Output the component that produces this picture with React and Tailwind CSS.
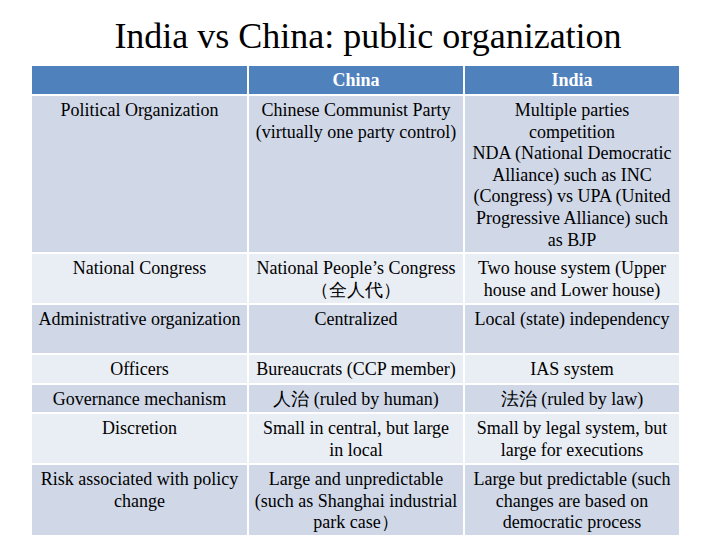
import React from 'react';

const rows = [
  {
    h: 'h-[156px]',
    bg: 'bg-[#d0d8e8]',
    cells: [
      ['Political Organization'],
      ['Chinese Communist Party', '(virtually one party control)'],
      [
        'Multiple parties',
        'competition',
        'NDA (National Democratic',
        'Alliance) such as INC',
        '(Congress) vs UPA (United',
        'Progressive Alliance) such',
        'as BJP',
      ],
    ],
  },
  {
    h: 'h-[49px]',
    bg: 'bg-[#e9edf4]',
    cells: [
      ['National Congress'],
      ['National People’s Congress', '（全人代）'],
      ['Two house system (Upper', 'house and Lower house)'],
    ],
  },
  {
    h: 'h-[48px]',
    bg: 'bg-[#d0d8e8]',
    cells: [['Administrative organization'], ['Centralized'], ['Local (state) independency']],
  },
  {
    h: 'h-[28px]',
    bg: 'bg-[#e9edf4]',
    cells: [['Officers'], ['Bureaucrats (CCP member)'], ['IAS system']],
  },
  {
    h: 'h-[27px]',
    bg: 'bg-[#d0d8e8]',
    cells: [['Governance mechanism'], ['人治 (ruled by human)'], ['法治 (ruled by law)']],
  },
  {
    h: 'h-[49px]',
    bg: 'bg-[#e9edf4]',
    cells: [
      ['Discretion'],
      ['Small in central, but large', 'in local'],
      ['Small by legal system, but', 'large for executions'],
    ],
  },
  {
    h: 'h-[70px]',
    bg: 'bg-[#d0d8e8]',
    cells: [
      ['Risk associated with policy', 'change'],
      ['Large and unpredictable', '(such as Shanghai industrial', 'park case）'],
      ['Large but predictable (such', 'changes are based on', 'democratic process'],
    ],
  },
];

const Cell = ({ lines, className }) => (
  <div className={`pt-[4px] text-center whitespace-nowrap text-[18px] leading-[21.6px] text-black ${className}`}>
    {lines.map((l, i) => (
      <div key={i}>{l}</div>
    ))}
  </div>
);

export default function App() {
  return (
    <div className="w-[720px] h-[540px] bg-white font-['Liberation_Serif',serif]">
      <h1 className="h-[66px] pt-[18px] pl-[16px] text-center text-[36px] leading-none font-normal text-black whitespace-nowrap">
        India vs China: public organization
      </h1>
      <div className="ml-[32px] w-[647px] flex flex-col gap-[2px]">
        <div className="grid grid-cols-[215px_214px_214px] gap-[2px] h-[28px]">
          <div className="bg-[#4f81bd]" />
          <div className="bg-[#4f81bd] pt-[4px] text-center text-[18px] leading-[21.6px] font-bold text-white">China</div>
          <div className="bg-[#4f81bd] pt-[4px] text-center text-[18px] leading-[21.6px] font-bold text-white">India</div>
        </div>
        {rows.map((r, i) => (
          <div key={i} className={`grid grid-cols-[215px_214px_214px] gap-[2px] ${r.h}`}>
            {r.cells.map((c, j) => (
              <Cell key={j} lines={c} className={r.bg} />
            ))}
          </div>
        ))}
      </div>
    </div>
  );
}
